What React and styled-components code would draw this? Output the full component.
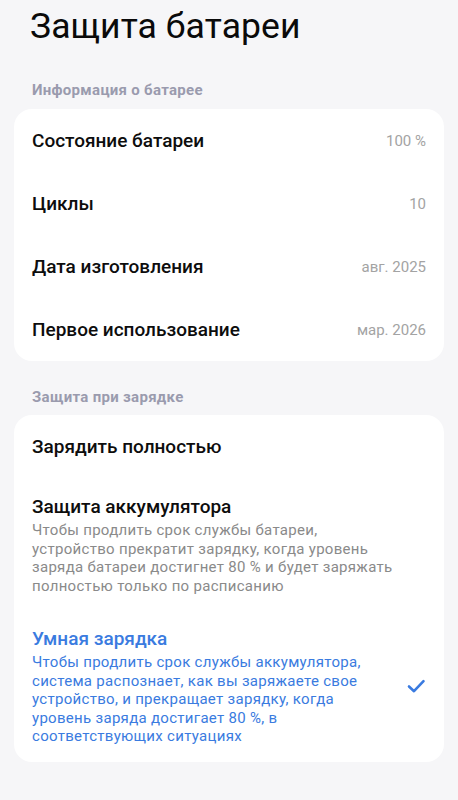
import React from "react";
import styled, { createGlobalStyle } from "styled-components";

const Global = createGlobalStyle`
  html, body { margin: 0; padding: 0; background: #f6f6f8; }
  body { font-family: Roboto, "Noto Sans", "Liberation Sans", sans-serif; -webkit-font-smoothing: antialiased; }
`;

const Page = styled.div`
  width: 458px;
  min-height: 800px;
  background: #f6f6f8;
  padding: 5px 14px 0;
  box-sizing: border-box;
  display: flex;
  flex-direction: column;
`;

const Title = styled.h1`
  margin: 0 0 0 16px;
  font-size: 35.5px;
  line-height: 42px;
  font-weight: 400;
  color: #0a0a0a;
  letter-spacing: 0.1px;
`;

const SectionLabel = styled.div`
  margin: ${(p) => p.$top}px 0 0 18px;
  font-size: 15px;
  line-height: 20px;
  font-weight: 700;
  letter-spacing: 0.3px;
  color: #9a9bae;
`;

const Card = styled.div`
  margin-top: ${(p) => p.$top}px;
  background: #ffffff;
  border-radius: 18px;
  display: flex;
  flex-direction: column;
  overflow: hidden;
`;

const InfoRow = styled.div`
  height: 63px;
  display: flex;
  align-items: center;
  justify-content: space-between;
  padding: 0 18px;
`;

const RowTitle = styled.div`
  font-size: 19px;
  line-height: 24px;
  font-weight: 500;
  color: ${(p) => (p.$active ? "#3a7be0" : "#0d0d0d")};
`;

const Value = styled.div`
  font-size: 15px;
  color: #a3a3a3;
`;

const OptionRow = styled.div`
  display: flex;
  align-items: center;
  gap: 16px;
  padding: 16px 18px;
  min-height: ${(p) => p.$min || 0}px;
  box-sizing: border-box;
`;

const OptionText = styled.div`
  flex: 1;
  display: flex;
  flex-direction: column;
  gap: 2px;
`;

const Desc = styled.div`
  font-size: 15px;
  line-height: 18.5px;
  letter-spacing: 0.3px;
  color: ${(p) => (p.$active ? "#3a7be0" : "#8a8a8a")};
`;

const Check = styled.svg`
  flex: none;
  width: 24px;
  height: 24px;
  margin-right: -2px;
`;

const info = [
  ["Состояние батареи", "100 %"],
  ["Циклы", "10"],
  ["Дата изготовления", "авг. 2025"],
  ["Первое использование", "мар. 2026"],
];

const lines = (arr) =>
  arr.map((l, i) => (
    <React.Fragment key={i}>
      {l}
      {i < arr.length - 1 && <br />}
    </React.Fragment>
  ));

export default function App() {
  return (
    <>
      <Global />
      <Page>
        <Title>Защита батареи</Title>
        <SectionLabel $top={33}>Информация о батарее</SectionLabel>
        <Card $top={9}>
          {info.map(([k, v]) => (
            <InfoRow key={k}>
              <RowTitle>{k}</RowTitle>
              <Value>{v}</Value>
            </InfoRow>
          ))}
        </Card>
        <SectionLabel $top={26}>Защита при зарядке</SectionLabel>
        <Card $top={8}>
          <OptionRow $min={64}>
            <OptionText>
              <RowTitle>Зарядить полностью</RowTitle>
            </OptionText>
          </OptionRow>
          <OptionRow>
            <OptionText>
              <RowTitle>Защита аккумулятора</RowTitle>
              <Desc>
                {lines([
                  "Чтобы продлить срок службы батареи,",
                  "устройство прекратит зарядку, когда уровень",
                  "заряда батареи достигнет 80 % и будет заряжать",
                  "полностью только по расписанию",
                ])}
              </Desc>
            </OptionText>
          </OptionRow>
          <OptionRow>
            <OptionText>
              <RowTitle $active>Умная зарядка</RowTitle>
              <Desc $active>
                {lines([
                  "Чтобы продлить срок службы аккумулятора,",
                  "система распознает, как вы заряжаете свое",
                  "устройство, и прекращает зарядку, когда",
                  "уровень заряда достигает 80 %, в",
                  "соответствующих ситуациях",
                ])}
              </Desc>
            </OptionText>
            <Check viewBox="0 0 24 24" fill="none">
              <path
                d="M5 12.5 L10 17.2 L19.5 7.2"
                stroke="#3a7be0"
                strokeWidth="2.6"
                strokeLinecap="round"
                strokeLinejoin="round"
              />
            </Check>
          </OptionRow>
        </Card>
      </Page>
    </>
  );
}
